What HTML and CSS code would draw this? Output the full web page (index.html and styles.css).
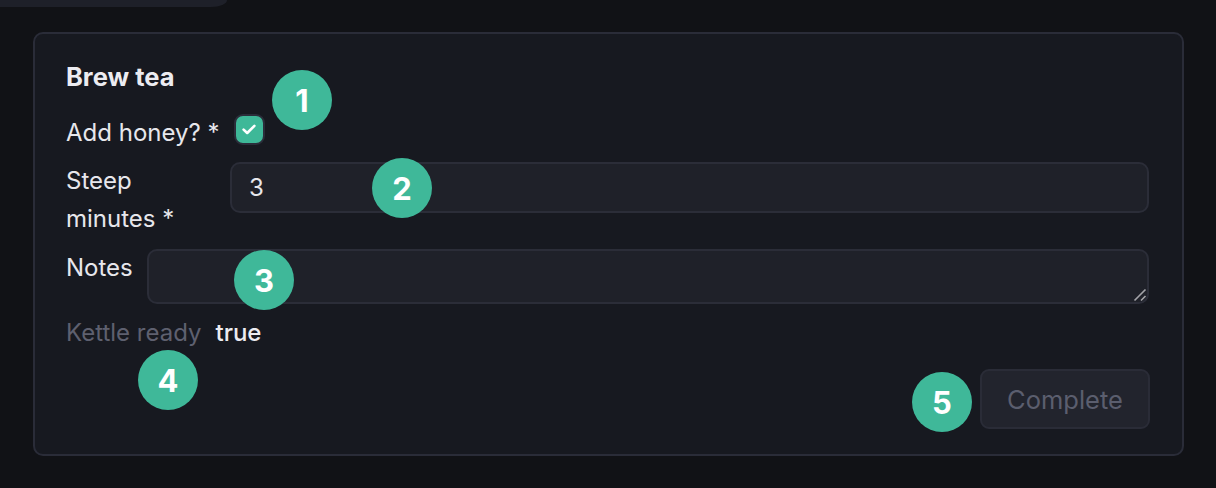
FILE: index.html
```html
<!DOCTYPE html>
<html lang="en">
<head>
<meta charset="utf-8">
<title>Brew tea</title>
<link rel="stylesheet" href="styles.css">
</head>
<body>
<div class="tab-edge"></div>
<form class="card">
  <h2 class="title">Brew tea</h2>
  <div class="row">
    <label class="label">Add honey? *</label>
    <span class="checkbox">
      <svg viewBox="0 0 14 11" width="14" height="11"><path d="M1.6 5.6 L5.2 9 L12.4 1.8" fill="none" stroke="#fff" stroke-width="2.6" stroke-linecap="round" stroke-linejoin="round"/></svg>
    </span>
  </div>
  <div class="row">
    <label class="label label-narrow">Steep minutes *</label>
    <input class="field" type="text" value="3">
  </div>
  <div class="row row-notes">
    <label class="label">Notes</label>
    <div class="area-wrap">
      <textarea class="field area"></textarea>
      <svg class="grip" viewBox="0 0 14 14" width="14" height="14"><path d="M1.5 12.5 L12.5 1.5 M8 12.5 L12.5 8" stroke="#a3a3a8" stroke-width="1.6" fill="none"/></svg>
    </div>
  </div>
  <div class="row">
    <span class="label muted">Kettle ready</span>
    <span class="label value">true</span>
  </div>
  <div class="actions">
    <button type="button" class="btn" disabled>Complete</button>
  </div>
</form>
<div class="badge b1">1</div>
<div class="badge b2">2</div>
<div class="badge b3">3</div>
<div class="badge b4">4</div>
<div class="badge b5">5</div>
</body>
</html>
```

FILE: styles.css
```css
html, body {
  margin: 0;
  padding: 0;
  background: #111216;
}
body {
  position: relative;
  width: 1216px;
  height: 488px;
  overflow: hidden;
  font-family: Inter, "Liberation Sans", sans-serif;
  color: #e7e7ec;
}
.tab-edge {
  width: 227px;
  height: 7px;
  background: #1e2029;
  border-bottom-right-radius: 16px 7px;
}
.card {
  box-sizing: border-box;
  margin: 25px 0 0 33px;
  width: 1151px;
  border: 2px solid #2a2c38;
  border-radius: 10px;
  background: #171920;
  padding: 27px 33px 25px 31px;
  display: flex;
  flex-direction: column;
  gap: 10px;
}
.title {
  margin: 0 0 11px 0;
  font-size: 25.5px;
  line-height: 32px;
  font-weight: 700;
  color: #ececf1;
}
.row {
  display: flex;
  align-items: flex-start;
  gap: 14px;
}
.label {
  font-size: 24px;
  line-height: 38px;
  flex: 0 0 auto;
}
.label-narrow {
  width: 150px;
}
.checkbox {
  box-sizing: border-box;
  width: 31px;
  height: 31px;
  border: 2.5px solid #2b2d3a;
  border-radius: 9px;
  background: #3eb898;
  display: flex;
  align-items: center;
  justify-content: center;
}
.checkbox svg {
  display: block;
}
.field {
  flex: 1 1 auto;
  min-width: 0;
  box-sizing: border-box;
  height: 51px;
  margin: 0;
  border: 2px solid #2b2d38;
  border-radius: 10px;
  background: #1f2129;
  color: #e7e7ec;
  font-family: Inter, "Liberation Sans", sans-serif;
  font-size: 24px;
  padding: 0 17px;
  outline: none;
}
.row-notes {
  padding-top: 1px;
}
.area-wrap {
  flex: 1 1 auto;
  position: relative;
  display: flex;
}
.area {
  height: 55px;
  resize: none;
  padding: 8px 17px;
}
.grip {
  position: absolute;
  right: 2px;
  bottom: 2px;
}
.muted {
  color: #5e606f;
}
.value {
  color: #ececf1;
  font-weight: 500;
}
.actions {
  display: flex;
  justify-content: flex-end;
  margin-top: 7px;
}
.btn {
  box-sizing: border-box;
  width: 170px;
  height: 60px;
  border: 2px solid #2a2c37;
  border-radius: 9px;
  background: #22242d;
  color: #5b5e6e;
  font-family: Inter, "Liberation Sans", sans-serif;
  font-size: 25.5px;
  padding: 0;
  margin-right: -1px;
}
.badge {
  position: absolute;
  width: 60px;
  height: 60px;
  border-radius: 50%;
  background: #3fb899;
  color: #ffffff;
  font-family: Inter, "Liberation Sans", sans-serif;
  font-weight: 700;
  font-size: 31px;
  display: flex;
  align-items: center;
  justify-content: center;
}
.b1 { left: 272px; top: 70px; }
.b2 { left: 372px; top: 158px; }
.b3 { left: 234px; top: 250px; }
.b4 { left: 138px; top: 350px; }
.b5 { left: 912px; top: 372px; }
```
